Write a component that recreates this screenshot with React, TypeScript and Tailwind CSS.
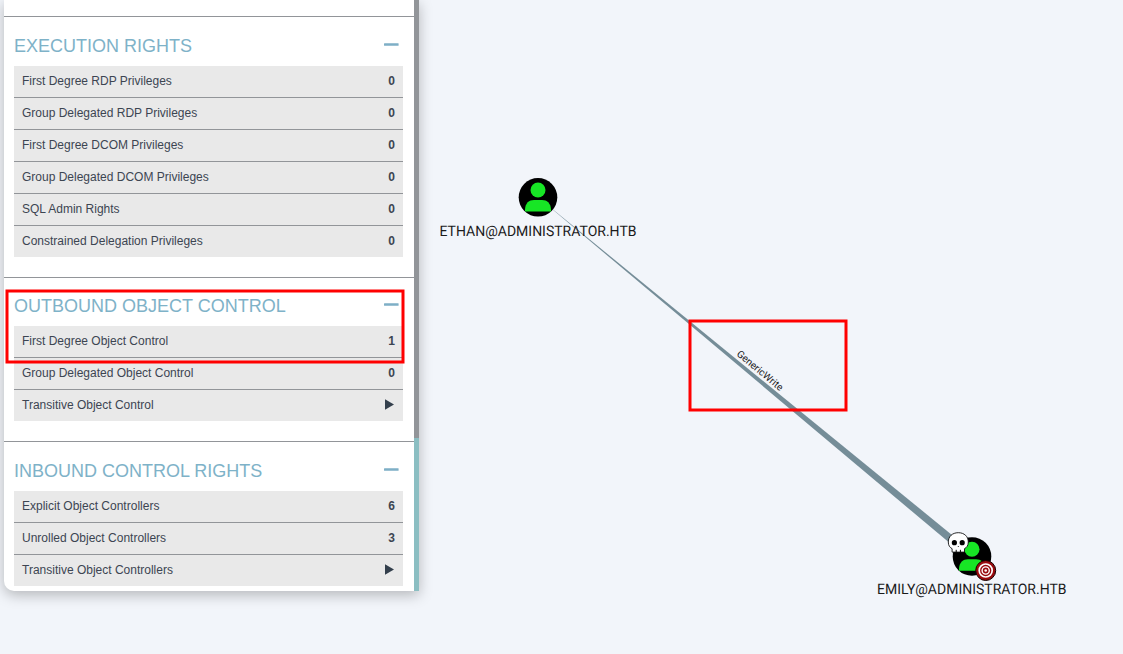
import React from "react";

type Row = { label: string; value?: string };
type SectionProps = { title: string; rows: Row[]; headerClass: string };

const EXECUTION: Row[] = [
  { label: "First Degree RDP Privileges", value: "0" },
  { label: "Group Delegated RDP Privileges", value: "0" },
  { label: "First Degree DCOM Privileges", value: "0" },
  { label: "Group Delegated DCOM Privileges", value: "0" },
  { label: "SQL Admin Rights", value: "0" },
  { label: "Constrained Delegation Privileges", value: "0" },
];
const OUTBOUND: Row[] = [
  { label: "First Degree Object Control", value: "1" },
  { label: "Group Delegated Object Control", value: "0" },
  { label: "Transitive Object Control" },
];
const INBOUND: Row[] = [
  { label: "Explicit Object Controllers", value: "6" },
  { label: "Unrolled Object Controllers", value: "3" },
  { label: "Transitive Object Controllers" },
];

function Section({ title, rows, headerClass }: SectionProps) {
  return (
    <section className="border-t border-[#929599] pr-[11px] pl-2.5 pb-5">
      <header className={`flex items-start justify-between pr-1 ${headerClass}`}>
        <h4 className="text-[18px] leading-5 text-[#7eb2c8]">{title}</h4>
        <svg className="mt-[7px]" width="15" height="3" viewBox="0 0 15 3">
          <rect x="0" y="0.3" width="14.6" height="2.5" rx="0.5" fill="#7eafc6" />
        </svg>
      </header>
      <ul className="bg-[#e9e9e9] text-[12px] leading-[17px] text-[#3c4552]">
        {rows.map((row) => (
          <li
            key={row.label}
            className="flex justify-between border-b border-[#929599] px-2 py-[7px] last:border-b-0"
          >
            <span>{row.label}</span>
            {row.value ? (
              <b>{row.value}</b>
            ) : (
              <svg className="mt-[2px] mr-px" width="9" height="11" viewBox="0 0 9 11">
                <path d="M0 0.3 9 5.5 0 10.7Z" fill="#333f4c" />
              </svg>
            )}
          </li>
        ))}
      </ul>
    </section>
  );
}

function Person({ x, y }: { x: number; y: number }) {
  return (
    <g transform={`translate(${x} ${y})`}>
      <circle r="19.3" fill="#000" />
      <circle cx="0" cy="-7.3" r="7.5" fill="#17e625" />
      <path d="M-13 14.3V12C-12.6 6-9 2.8-4 2.8H4C9 2.8 12.6 6 13 12V14.3Z" fill="#17e625" />
    </g>
  );
}

function Graph() {
  return (
    <svg
      className="block h-[654px] w-[1123px]"
      viewBox="0 0 1123 654"
      fontFamily="Roboto, sans-serif"
      textRendering="geometricPrecision"
    >
      <path d="M538 197.3 969.4 559.6 974.6 553.4Z" fill="#758d98" />
      <Person x={538} y={197.3} />
      <Person x={972} y={556.5} />
      <text x="439.5" y="235.7" fontSize="14.6" textLength="197" lengthAdjust="spacingAndGlyphs" fill="#1a1a1a">
        ETHAN@ADMINISTRATOR.HTB
      </text>
      <text x="877" y="593.9" fontSize="14.6" textLength="189.5" lengthAdjust="spacingAndGlyphs" fill="#1a1a1a">
        EMILY@ADMINISTRATOR.HTB
      </text>
      <text
        transform="translate(736 355) rotate(39.6)"
        fontSize="10"
        textLength="57"
        lengthAdjust="spacingAndGlyphs"
        fill="#1a1a1a"
      >
        GenericWrite
      </text>
      <g transform="translate(958.3 542.5)">
        <path
          d="M0-9.8C6-9.8 10-6 10-.5 10 3 8.5 5 6.2 6.2V9.6H-6.2V6.2C-8.5 5-10 3-10-.5-10-6-6-9.8 0-9.8Z"
          fill="#fff"
          stroke="#111"
          strokeWidth="0.9"
        />
        <circle cx="-3.9" cy="0.2" r="2.6" fill="#000" />
        <circle cx="3.9" cy="0.2" r="2.6" fill="#000" />
        <path d="M-0.8 4.6 0 3.6 0.8 4.6Z" fill="#000" />
        <path d="M-2.1 7.3V9.6M2.1 7.3V9.6" stroke="#000" strokeWidth="1" />
      </g>
      <g transform="translate(985.7 570.5)">
        <circle r="10" fill="#990b0e" stroke="#160000" strokeWidth="1" />
        <circle r="6.5" fill="none" stroke="#fff" strokeWidth="1.7" />
        <circle r="3.6" fill="none" stroke="#fff" strokeWidth="1.4" />
        <circle r="1.3" fill="#fff" />
      </g>
    </svg>
  );
}

function Annotations() {
  return (
    <svg
      className="pointer-events-none absolute inset-0 h-[654px] w-[1123px]"
      viewBox="0 0 1123 654"
      fill="none"
      stroke="#ff0000"
      strokeWidth="3"
    >
      <rect x="7" y="291" width="396" height="71" />
      <rect x="690" y="321" width="156" height="89" />
    </svg>
  );
}

export default function App() {
  return (
    <main className="relative h-[654px] w-[1123px] overflow-hidden bg-[#f2f5fa]">
      <Graph />
      <aside className="absolute top-0 left-1 flex h-[591px] w-[415px] rounded-bl-[10px] bg-white font-['Liberation_Sans',sans-serif] shadow-[0_4px_14px_rgba(0,0,0,0.26)]">
        <div className="h-full w-[410px] overflow-hidden rounded-b-[10px] pt-4">
          <Section title="EXECUTION RIGHTS" rows={EXECUTION} headerClass="h-[49px] pt-[19px]" />
          <Section title="OUTBOUND OBJECT CONTROL" rows={OUTBOUND} headerClass="h-12 pt-[18px]" />
          <Section title="INBOUND CONTROL RIGHTS" rows={INBOUND} headerClass="h-[49px] pt-[19px]" />
        </div>
        <div className="h-full w-[5px] bg-[#8bbec2]">
          <div className="h-[438px] bg-[#929599]" />
        </div>
      </aside>
      <Annotations />
    </main>
  );
}
